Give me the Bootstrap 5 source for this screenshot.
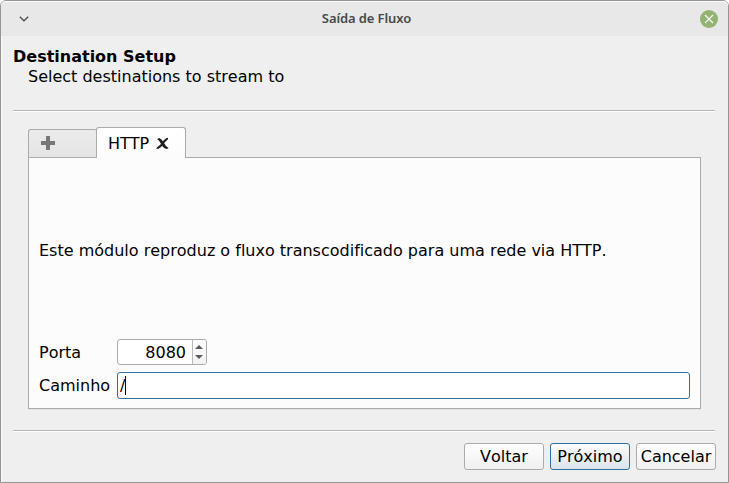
<!DOCTYPE html>
<html lang="pt-BR">
<head>
<meta charset="utf-8">
<meta name="viewport" content="width=device-width, initial-scale=1">
<title>Saída de Fluxo</title>
<link href="https://cdn.jsdelivr.net/npm/bootstrap@5.3.0/dist/css/bootstrap.min.css" rel="stylesheet">
<style>
body{background:#fff;font:16px/20px "DejaVu Sans",sans-serif;font-kerning:none;color:#000;overflow:hidden}
.dialog{width:729px;height:483px;background:#efefef;border:1px solid #949494;border-radius:6px 6px 0 0;box-shadow:inset 1px 1px #fafafa}
.titlebar{height:35px;background:#e8e8e8;border-radius:5px 5px 0 0;box-shadow:inset 0 1px #fbfbfb;padding:0 10px 0 18px}
.titlebar h1{font:600 13px/18px "Noto Sans",sans-serif;color:#484848;letter-spacing:-.1px;padding:0 0 2px 4px}
.intro{height:74px;padding:11px 12px 0}
.intro h2{font-size:16px;line-height:20px}
.intro p{padding-left:15px}
.rule{height:2px;margin:0 13px 0 12px;border-top:1px solid #b4b4b4;background:#fff}
.work{height:318px;padding:15px 27px 0}
.tabs{height:31px;margin-bottom:-1px}
.tabs .nav-link{font-size:16px;line-height:20px;color:#000;border:1px solid #ababab;border-radius:3px 3px 0 0}
.tabs .tab-add{width:69px;height:29px;padding:6px 0 0 12px;margin-right:-1px;border-bottom:1px solid #ababab;border-right:0;background:linear-gradient(#ebebeb,#e5e5e5)}
.tabs .tab-http{width:90px;height:31px;padding:2px 0 0 11px;gap:7px;border-bottom:0;background:linear-gradient(#fff,#fcfcfc)}
.tab-http svg{margin-top:-2px}
.pane{height:252px;background:#fcfcfc;border:1px solid #ababab;border-radius:0;padding:0 10px 9px;box-shadow:0 1px #e4e4e4}
.message{padding-top:5px;font-variant-ligatures:none}
.fieldname{width:78px}
.port-row .fieldname{padding-top:1px}
.path-row{margin-top:7px}
.field{background:#fff;border:1px solid #ababab;border-radius:3px;height:26px}
.spin{width:90px}
.number{padding:1px 6px 0 0}
.steps{width:14px;border-left:1px solid #b9b9b9;background:linear-gradient(#fdfdfd,#f2f2f2);border-radius:0 2px 2px 0}
.steps svg{margin-left:-1px}
.path{height:27px;border-color:#2e72a0;padding-left:2px}
.caret{width:1px;height:19px;background:#000}
.actions{padding:11px 12px 0;gap:6px}
.actions .btn{width:80px;height:27px;padding:0;font-size:16px;line-height:25px;font-kerning:none;color:#000;border:1px solid #ababab;border-radius:3px;background:linear-gradient(#fefefe,#f0f0f0)}
.actions .btn-next{border-color:#2e72a0;background:linear-gradient(#fbfcfd,#dce4ec)}
</style>
<script src="https://cdn.jsdelivr.net/npm/bootstrap@5.3.0/dist/js/bootstrap.bundle.min.js"></script>
</head>
<body>
<main class="dialog d-flex flex-column">
  <header class="titlebar d-flex align-items-center justify-content-between">
    <svg width="10" height="6" viewBox="0 0 10 6" fill="none" stroke="#4a4a4a" stroke-width="1.2"><path d="M.8.7 5 4.8 9.2.7"/></svg>
    <h1 class="m-0">Saída de Fluxo</h1>
    <svg width="18" height="18" viewBox="0 0 18 18"><circle cx="9" cy="9" r="9" fill="#92b372"/><path d="m5 5 8 8m0-8-8 8" stroke="#fff" stroke-width="1.1"/></svg>
  </header>
  <section class="intro">
    <h2 class="fw-bold m-0">Destination Setup</h2>
    <p class="m-0">Select destinations to stream to</p>
  </section>
  <div class="rule"></div>
  <section class="work">
    <nav class="nav tabs align-items-end position-relative">
      <a class="nav-link tab-add" aria-label="Adicionar"><svg class="d-block" width="14" height="14" viewBox="0 0 14 14"><path d="M5 0h4v5h5v4H9v5H5V9H0V5h5z" fill="#777"/></svg></a>
      <a class="nav-link tab-http d-flex align-items-center">HTTP
        <svg width="13" height="13" viewBox="0 0 13 13" fill="#1c1f1c"><path d="M1.2 2 3.4 1Q5.6 2 7.4 4.9 9.4 9 12.6 11L11 12.1Q7.2 11.2 5.4 7.5 3.6 3.6 1.2 2Z"/><path d="M10.2 1.2 12.1.8 12 2.3Q9 4.9 7.2 7.3 5.4 10.3 2.6 11.8L.4 12 .9 10.5Q4 8.6 5.8 5.8 7.6 2.8 10.2 1.2Z"/></svg>
      </a>
    </nav>
    <div class="pane d-flex flex-column">
      <div class="message flex-grow-1 d-flex align-items-center">Este módulo reproduz o fluxo transcodificado para uma rede via HTTP.</div>
      <div class="port-row d-flex align-items-center">
        <label class="fieldname">Porta</label>
        <div class="field spin d-flex">
          <div class="number flex-grow-1 d-flex align-items-center justify-content-end">8080</div>
          <div class="steps d-flex flex-column align-items-center justify-content-center">
            <svg width="8" height="14" viewBox="0 0 8 14" fill="#5b5b5b"><path d="M0 4 4 0l4 4zM0 10h8l-4 4z"/></svg>
          </div>
        </div>
      </div>
      <div class="path-row d-flex align-items-center">
        <label class="fieldname">Caminho</label>
        <div class="field path flex-grow-1 d-flex align-items-center">/<i class="caret"></i></div>
      </div>
    </div>
  </section>
  <div class="rule"></div>
  <footer class="actions d-flex justify-content-end">
    <button class="btn">Voltar</button>
    <button class="btn btn-next">Próximo</button>
    <button class="btn">Cancelar</button>
  </footer>
</main>
</body>
</html>
